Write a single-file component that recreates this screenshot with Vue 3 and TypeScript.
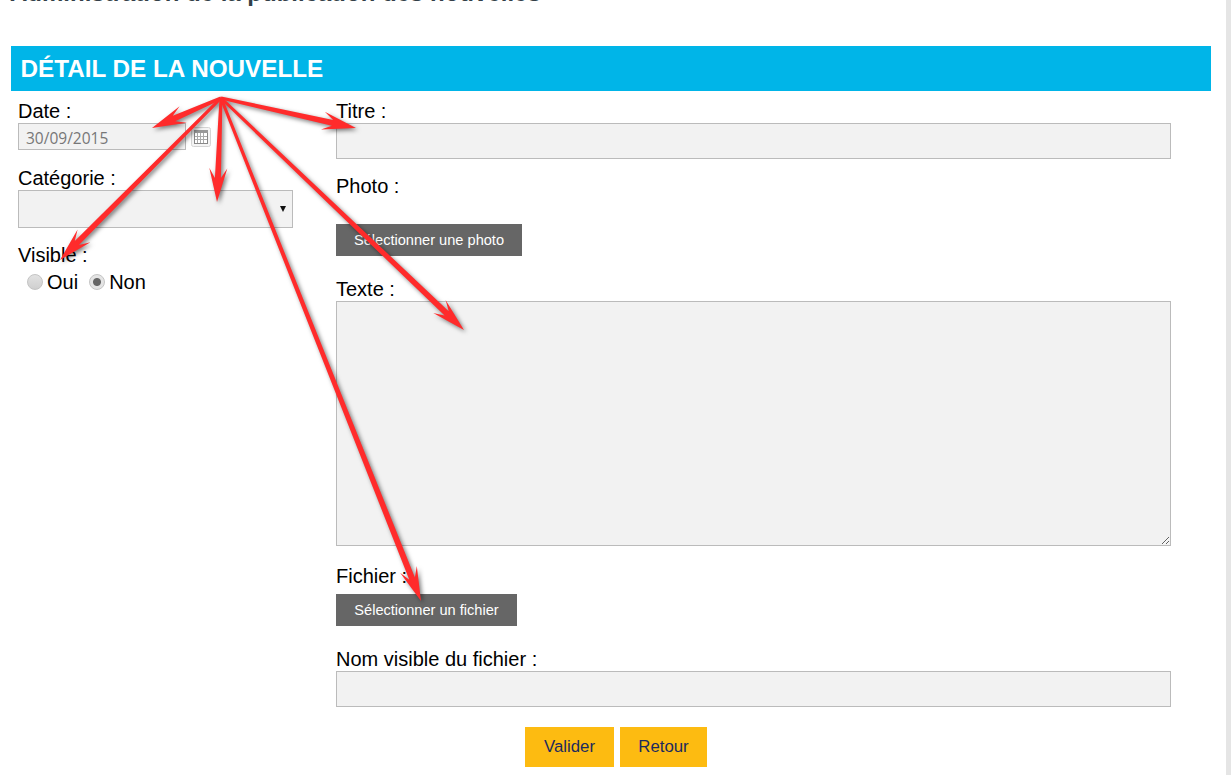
<script setup lang="ts">
interface Point { x: number; y: number }
const apex: Point = { x: 221, y: 98 }
const tips: Point[] = [
  { x: 152, y: 128 },
  { x: 356, y: 128 },
  { x: 217, y: 202 },
  { x: 60, y: 260 },
  { x: 464, y: 330 },
  { x: 421, y: 601 },
]
function arrow(t: Point): string {
  const dx = t.x - apex.x
  const dy = t.y - apex.y
  const len = Math.hypot(dx, dy)
  const ux = dx / len
  const uy = dy / len
  const nx = -uy
  const ny = ux
  const at = (back: number, side: number): string =>
    `${(t.x - ux * back + nx * side).toFixed(1)},${(t.y - uy * back + ny * side).toFixed(1)}`
  const tail = (side: number): string =>
    `${(apex.x + nx * side).toFixed(1)},${(apex.y + ny * side).toFixed(1)}`
  return [tail(1.5), at(24, 3), at(34, 9), at(0, 0), at(34, -9), at(24, -3), tail(-1.5)].join(' ')
}
const arrows = tips.map(arrow)
const gridLines = [3, 6, 9]
</script>

<template>
  <div class="page">
    <h1 class="title">Administration de la publication des nouvelles</h1>
    <h2 class="banner">DÉTAIL DE LA NOUVELLE</h2>
    <div class="columns">
      <div class="col">
        <label class="lbl">Date :</label>
        <div class="date-row">
          <input class="field date" type="text" value="30/09/2015" />
          <svg class="cal" width="20" height="20" viewBox="0 0 20 20">
            <rect x="0.5" y="0.5" width="19" height="19" rx="2" fill="#f4f4f4" stroke="#d4d4d4" />
            <rect x="3.5" y="3.5" width="13" height="13" fill="#fff" stroke="#888" />
            <rect x="3" y="3" width="14" height="3" fill="#999" />
            <g stroke="#aaa">
              <path v-for="n in gridLines" :key="n" :d="`M${n + 3.5} 6V16`" />
              <path d="M4 9.5H16M4 12.5H16" />
            </g>
          </svg>
        </div>
        <label class="lbl next-left">Catégorie :</label>
        <div class="select-wrap">
          <select class="field select"></select>
        </div>
        <label class="lbl visible">Visible :</label>
        <div class="radios">
          <label class="radio-item"><input type="radio" name="visible" class="radio" />Oui</label>
          <label class="radio-item"><input type="radio" name="visible" class="radio" checked />Non</label>
        </div>
      </div>
      <div class="col">
        <label class="lbl">Titre :</label>
        <input class="field text" type="text" />
        <label class="lbl photo">Photo :</label>
        <button class="file-btn photo-btn" type="button">Sélectionner une photo</button>
        <label class="lbl texte">Texte :</label>
        <textarea class="field area"></textarea>
        <label class="lbl fichier">Fichier :</label>
        <button class="file-btn fichier-btn" type="button">Sélectionner un fichier</button>
        <label class="lbl nom">Nom visible du fichier :</label>
        <input class="field text" type="text" />
      </div>
    </div>
    <div class="actions">
      <button class="action valider" type="button">Valider</button>
      <button class="action retour" type="button">Retour</button>
    </div>
    <svg class="arrows" width="1231" height="775" viewBox="0 0 1231 775">
      <polygon v-for="(p, i) in arrows" :key="i" :points="p" fill="#ff2b2b" />
    </svg>
  </div>
</template>

<style>
html, body { margin: 0; background: #fff; overflow: hidden; }
</style>

<style scoped>
.page {
  position: relative;
  box-sizing: border-box;
  width: 1231px;
  height: 775px;
  overflow: hidden;
  border-right: 5px solid #e5e5e5;
  padding-left: 11px;
  font-family: "Liberation Sans", Arial, sans-serif;
  color: #000;
  background: #fff;
}
.title {
  margin: -20px 0 0 -1px;
  height: 26px;
  line-height: 26px;
  font-size: 24px;
  font-weight: 700;
  color: #333f48;
  white-space: nowrap;
}
.banner {
  margin: 40px 0 0;
  box-sizing: border-box;
  width: 1200px;
  height: 45px;
  line-height: 45px;
  padding-left: 9.5px;
  font-size: 24.25px;
  font-weight: 700;
  color: #fff;
  background: #00b5e8;
}
.columns {
  display: grid;
  grid-template-columns: 318px 835px;
  padding: 9px 0 0 7px;
}
.col { display: flex; flex-direction: column; align-items: flex-start; }
.lbl {
  display: block;
  height: 22px;
  line-height: 22px;
  font-size: 20px;
  margin-bottom: 1px;
  white-space: nowrap;
}
.field {
  box-sizing: border-box;
  display: block;
  margin: 0;
  background: #f2f2f2;
  border: 1px solid #bbb;
  border-radius: 0;
  outline: none;
}
.date-row { display: flex; align-items: center; gap: 5px; }
.date {
  width: 168px;
  height: 27px;
  padding: 2px 7px 0;
  font-family: "Open Sans", sans-serif;
  font-size: 15.5px;
  color: #777;
}
.next-left { margin-top: 17px; }
.select-wrap { position: relative; width: 275px; height: 38px; }
.select-wrap::after {
  content: "";
  position: absolute;
  right: 7px;
  top: 16px;
  border-left: 3px solid transparent;
  border-right: 3px solid transparent;
  border-top: 6px solid #111;
}
.select {
  appearance: none;
  width: 275px;
  height: 38px;
}
.visible { margin-top: 16px; margin-bottom: 5px; }
.radios { display: flex; gap: 11px; padding-left: 9px; height: 22px; }
.radio-item {
  display: flex;
  align-items: center;
  gap: 4px;
  font-size: 20px;
  line-height: 22px;
}
.radio {
  appearance: none;
  box-sizing: border-box;
  width: 16px;
  height: 16px;
  margin: 0;
  border-radius: 50%;
  border: 1px solid #c4c4c4;
  background: linear-gradient(#e2e2e2, #cfcfcf);
}
.radio:checked {
  background: radial-gradient(circle, #666 0 3.5px, #e4e4e4 4.5px);
}
.text { width: 835px; height: 36px; }
.photo { margin-top: 16px; margin-bottom: 27px; }
.file-btn {
  display: block;
  box-sizing: border-box;
  height: 32px;
  margin: 0;
  padding: 0;
  border: 0;
  background: #666;
  color: #fff;
  font-family: inherit;
  font-size: 14.6px;
  text-align: center;
}
.photo-btn { width: 186px; }
.fichier-btn { width: 181px; }
.texte { margin-top: 22px; }
.area {
  width: 835px;
  height: 245px;
  resize: vertical;
}
.fichier { margin-top: 19px; margin-bottom: 7px; }
.nom { margin-top: 22px; }
.actions {
  display: flex;
  gap: 6px;
  margin: 20px 0 0 514px;
}
.action {
  box-sizing: border-box;
  height: 40px;
  margin: 0;
  padding: 0;
  border: 0;
  background: #fdbb11;
  color: #1c2a5e;
  font-family: inherit;
  font-size: 16.8px;
}
.valider { width: 89px; }
.retour { width: 87px; }
.arrows {
  position: absolute;
  left: 0;
  top: 0;
  pointer-events: none;
  filter: drop-shadow(2px 2px 2px rgba(0, 0, 0, 0.5));
}
</style>
